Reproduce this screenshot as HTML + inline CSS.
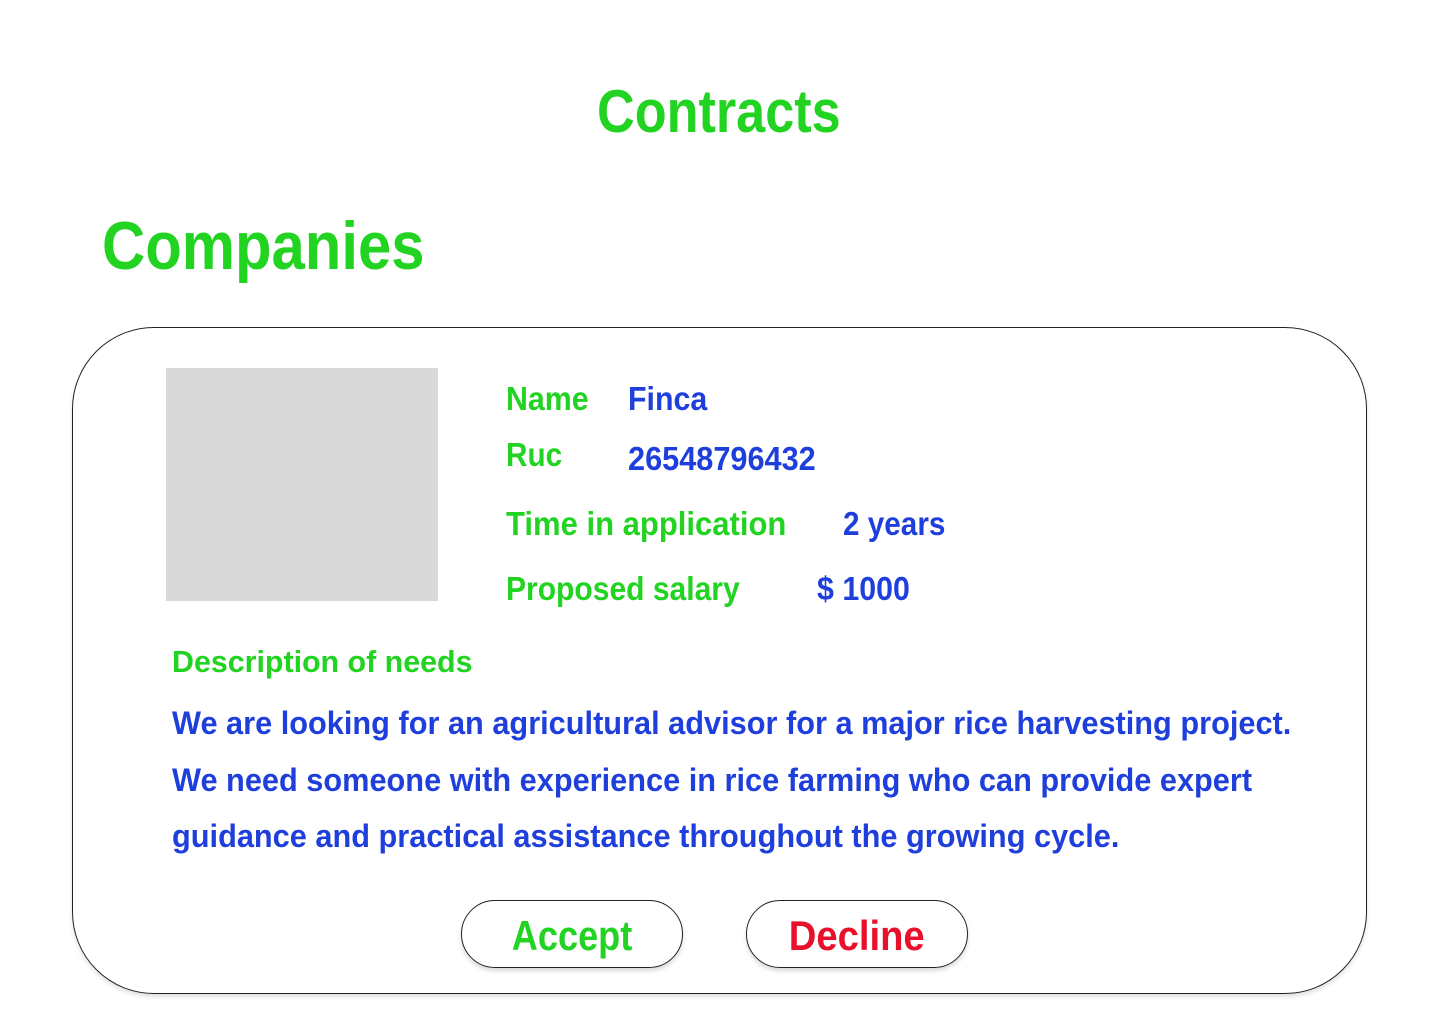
<!DOCTYPE html>
<html><head><meta charset="utf-8"><style>
html,body{margin:0;padding:0;background:#fff;width:1440px;height:1024px;overflow:hidden;position:relative;font-family:"Liberation Sans","DejaVu Sans",sans-serif;font-weight:bold}
.t{position:absolute;white-space:nowrap;line-height:1;transform-origin:0 0}
.g{color:#22d322}.b{color:#1f3fdc}.r{color:#e8102a}
.card{position:absolute;left:72px;top:327px;width:1293px;height:665px;border:1px solid #222;border-radius:82px;box-shadow:0 3px 4px rgba(0,0,0,.12)}
.img{position:absolute;left:166px;top:368px;width:272px;height:233px;background:#d9d9d9}
.btn{position:absolute;top:900px;width:220px;height:66px;border:1px solid #222;border-radius:34px;box-shadow:0 3px 4px rgba(0,0,0,.15);text-align:center;font-size:42px;line-height:70px}
.btn span{display:inline-block}
</style></head><body>
<div class="t g" style="left:597px;top:82px;font-size:60px;transform:scaleX(.87)">Contracts</div>
<div class="t g" style="left:102px;top:212px;font-size:68px;transform:scaleX(.88)">Companies</div>
<div class="card"></div>
<div class="img"></div>
<div class="t g" style="left:506px;top:382px;font-size:33px;transform:scaleX(.92)">Name</div>
<div class="t b" style="left:628px;top:382px;font-size:33px;transform:scaleX(.92)">Finca</div>
<div class="t g" style="left:506px;top:438px;font-size:33px;transform:scaleX(.9)">Ruc</div>
<div class="t b" style="left:628px;top:442px;font-size:33px;transform:scaleX(.93)">26548796432</div>
<div class="t g" style="left:506px;top:507px;font-size:33px;transform:scaleX(.94)">Time in application</div>
<div class="t b" style="left:843px;top:507px;font-size:33px;transform:scaleX(.9)">2 years</div>
<div class="t g" style="left:506px;top:572px;font-size:33px;transform:scaleX(.91)">Proposed salary</div>
<div class="t b" style="left:817px;top:572px;font-size:33px;transform:scaleX(.92)">$ 1000</div>
<div class="t g" style="left:172px;top:646px;font-size:31px;transform:scaleX(.98)">Description of needs</div>
<div class="t b" style="left:172px;top:707px;font-size:32px;transform:scaleX(.96)">We are looking for an agricultural advisor for a major rice harvesting project.</div>
<div class="t b" style="left:172px;top:764px;font-size:32px;transform:scaleX(.96)">We need someone with experience in rice farming who can provide expert</div>
<div class="t b" style="left:172px;top:820px;font-size:32px;transform:scaleX(.96)">guidance and practical assistance throughout the growing cycle.</div>
<div class="btn g" style="left:461px"><span style="transform:scaleX(.86)">Accept</span></div>
<div class="btn r" style="left:746px"><span style="transform:scaleX(.91)">Decline</span></div>
</body></html>
